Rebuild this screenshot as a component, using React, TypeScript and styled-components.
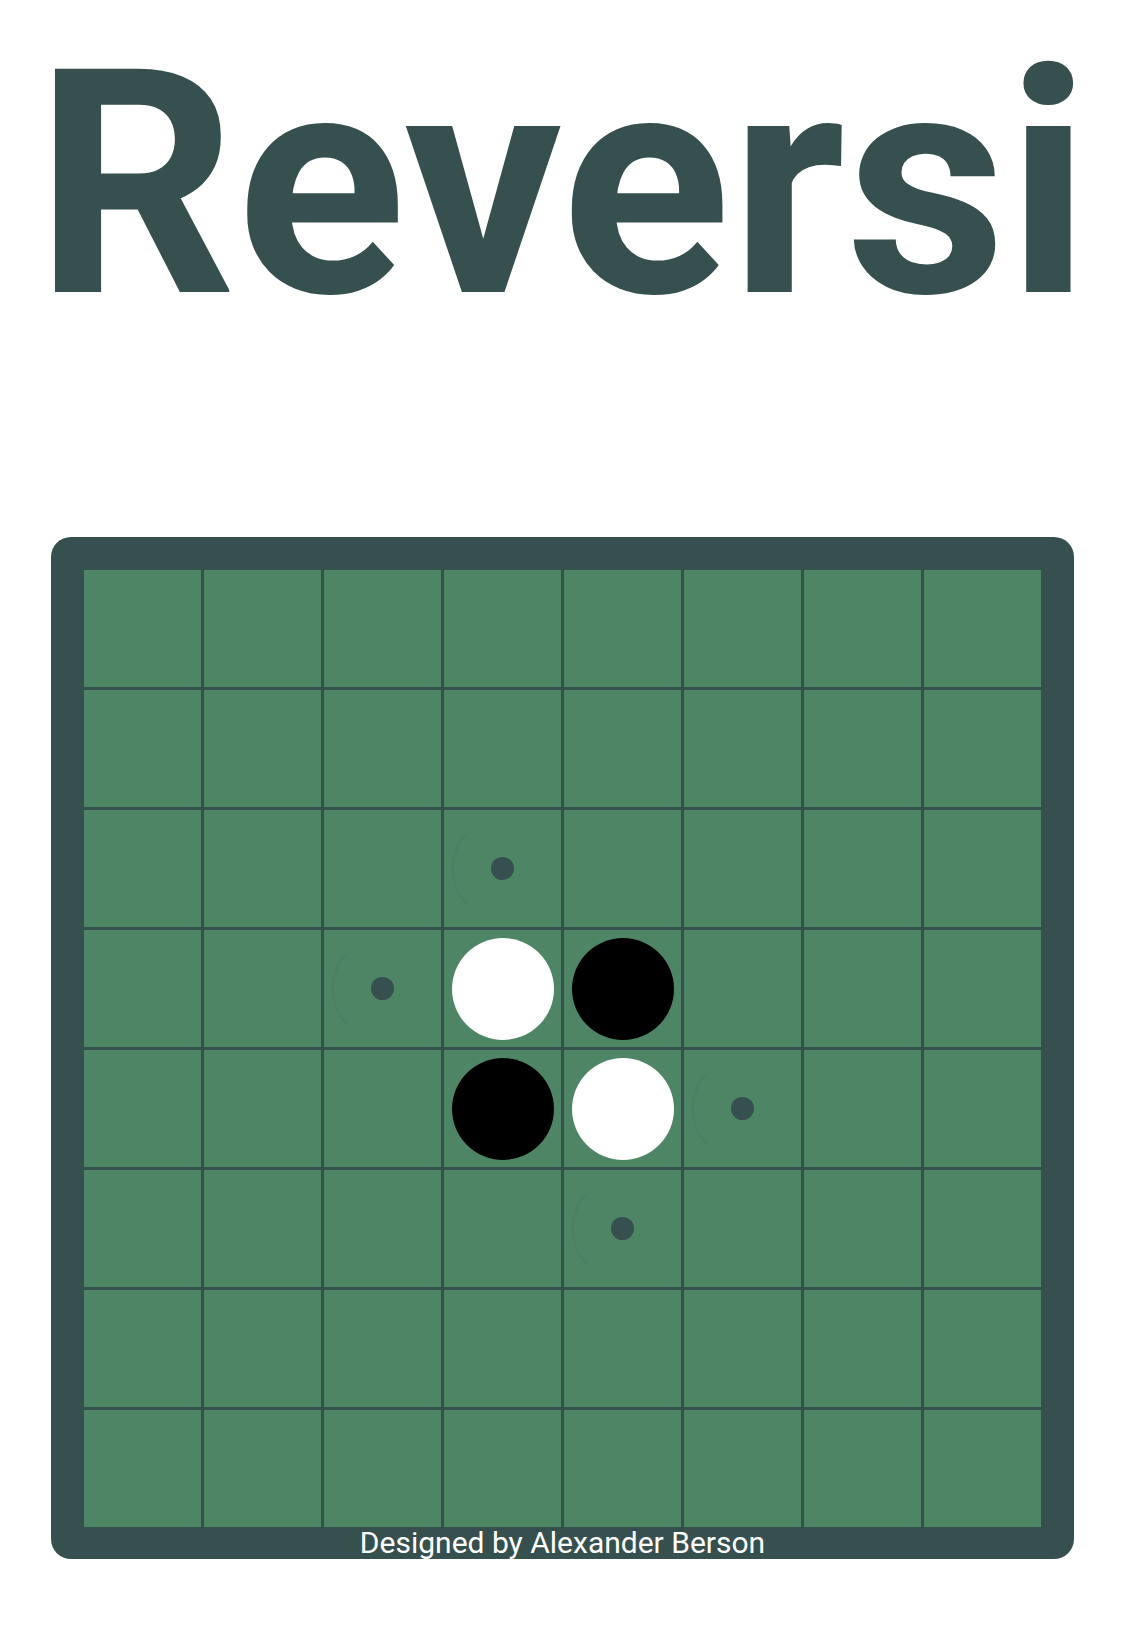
import React from "react";
import styled, { createGlobalStyle } from "styled-components";

const DARK = "#364f4f";
const GREEN = "#4e8565";

const GlobalStyle = createGlobalStyle`
  html, body {
    margin: 0;
    padding: 0;
    background: #ffffff;
  }
  body {
    font-family: Roboto, "Liberation Sans", Arial, sans-serif;
  }
`;

const Page = styled.main`
  width: 1125px;
  min-height: 1649px;
  display: flex;
  flex-direction: column;
  align-items: center;
  box-sizing: border-box;
  padding-top: 1px;
`;

const Title = styled.h1`
  margin: 0;
  font-family: Roboto, "Liberation Sans", Arial, sans-serif;
  font-weight: 700;
  font-size: 314px;
  line-height: normal;
  color: ${DARK};
  text-align: center;
`;

const Frame = styled.section`
  margin-top: 168px;
  width: 1023px;
  box-sizing: border-box;
  padding: 33px 33px 0;
  background: ${DARK};
  border-radius: 20px;
  display: flex;
  flex-direction: column;
`;

const Grid = styled.div`
  display: grid;
  grid-template-columns: repeat(8, 117px);
  grid-template-rows: repeat(8, 117px);
  gap: 3px;
  background: ${DARK};
`;

const Cell = styled.div`
  background: ${GREEN};
  display: flex;
  align-items: center;
  justify-content: center;
  position: relative;
`;

const Disc = styled.div<{ $color: "white" | "black" }>`
  width: 102px;
  height: 102px;
  border-radius: 50%;
  background: ${(p) => (p.$color === "white" ? "#ffffff" : "#000000")};
`;

const Hint = styled.div`
  width: 102px;
  height: 102px;
  box-sizing: border-box;
  border-radius: 50%;
  border: 1px solid transparent;
  border-left-color: rgba(54, 79, 79, 0.16);
  display: flex;
  align-items: center;
  justify-content: center;
`;

const HintDot = styled.div`
  width: 23px;
  height: 23px;
  border-radius: 50%;
  background: ${DARK};
`;

const Caption = styled.footer`
  color: #ffffff;
  font-family: Roboto, "Liberation Sans", Arial, sans-serif;
  font-size: 30px;
  line-height: 32px;
  text-align: center;
`;

type Piece = "white" | "black" | "hint" | null;

const board: Piece[][] = Array.from({ length: 8 }, () =>
  Array.from({ length: 8 }, () => null as Piece)
);
board[3][3] = "white";
board[3][4] = "black";
board[4][3] = "black";
board[4][4] = "white";
board[2][3] = "hint";
board[3][2] = "hint";
board[4][5] = "hint";
board[5][4] = "hint";

export default function App() {
  return (
    <>
      <GlobalStyle />
      <Page>
        <Title>Reversi</Title>
        <Frame>
          <Grid>
            {board.map((row, r) =>
              row.map((p, c) => (
                <Cell key={`${r}-${c}`}>
                  {p === "white" || p === "black" ? <Disc $color={p} /> : null}
                  {p === "hint" ? (
                    <Hint>
                      <HintDot />
                    </Hint>
                  ) : null}
                </Cell>
              ))
            )}
          </Grid>
          <Caption>Designed by Alexander Berson</Caption>
        </Frame>
      </Page>
    </>
  );
}
